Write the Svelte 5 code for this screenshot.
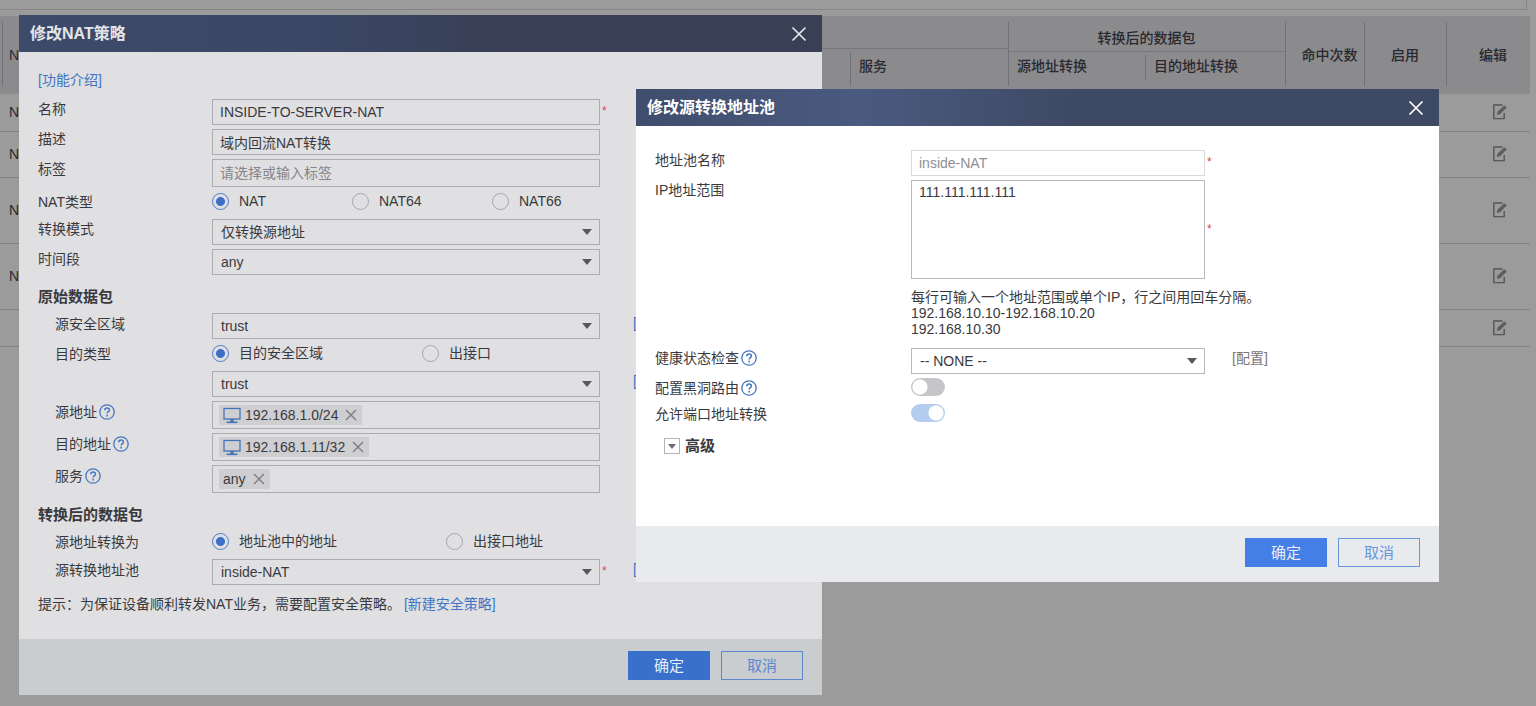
<script lang="ts">
  interface Choice {
    value: string;
    label: string;
  }

  let name = $state('INSIDE-TO-SERVER-NAT');
  let description = $state('域内回流NAT转换');
  let tag = $state('');
  let natType = $state('nat');
  let mode = $state('src');
  let period = $state('any');
  let srcZone = $state('trust');
  let dstType = $state('zone');
  let dstZone = $state('trust');
  let srcTarget = $state('pool');
  let pool = $state('inside-NAT');

  let poolRange = $state('111.111.111.111');
  let healthCheck = $state('none');
  let blackhole = $state(false);
  let allowPort = $state(true);

  const natTypes: Choice[] = [
    { value: 'nat', label: 'NAT' },
    { value: 'nat64', label: 'NAT64' },
    { value: 'nat66', label: 'NAT66' },
  ];
  const dstTypes: Choice[] = [
    { value: 'zone', label: '目的安全区域' },
    { value: 'iface', label: '出接口' },
  ];
  const srcTargets: Choice[] = [
    { value: 'pool', label: '地址池中的地址' },
    { value: 'iface', label: '出接口地址' },
  ];

  const policies = [
    { name: 'N', size: 'short' },
    { name: 'N', size: 'medium' },
    { name: 'N', size: 'tall' },
    { name: 'N', size: 'tall' },
    { name: '', size: 'short' },
  ];
</script>

{#snippet closeIcon()}
  <svg width="16" height="16" viewBox="0 0 16 16" fill="none" stroke="currentColor" stroke-width="1.7"><path d="M1.5 1.5l13 13M14.5 1.5l-13 13" /></svg>
{/snippet}

{#snippet help()}
  <svg class="help" width="16" height="16" viewBox="0 0 16 16" fill="none" stroke="currentColor">
    <circle cx="8" cy="8" r="7.2" stroke-width="1.3" />
    <path d="M5.7 6.3c0-1.5 1-2.4 2.4-2.4s2.3.9 2.3 2.1c0 1.6-2.2 1.7-2.2 3.4" stroke-width="1.5" />
    <path d="M8.1 10.8v1.6" stroke-width="1.6" />
  </svg>
{/snippet}

{#snippet chip(text: string, host: boolean)}
  <span class="chip">
    {#if host}
      <svg width="18" height="18" viewBox="0 0 18 18" fill="none" stroke="#4673b8">
        <rect x="1" y="2.5" width="16" height="10.5" stroke-width="1.3" />
        <path d="M9 13v3" stroke-width="3" />
        <path d="M3.5 16.3h11" stroke-width="1.6" />
      </svg>
    {/if}
    <span>{text}</span>
    <button type="button" class="chip-x" aria-label="删除 {text}">
      <svg width="12" height="12" viewBox="0 0 12 12" fill="none" stroke="currentColor" stroke-width="1.5"><path d="M1 1l10 10M11 1L1 11" /></svg>
    </button>
  </span>
{/snippet}

<main class="page">
  <div class="toolbar"></div>
  <table class="policy-table">
    <colgroup>
      <col />
      <col class="col-src" />
      <col class="col-service" />
      <col class="col-snat" />
      <col class="col-dnat" />
      <col class="col-hits" />
      <col class="col-enable" />
      <col class="col-edit" />
    </colgroup>
    <thead>
      <tr class="head-top">
        <th rowspan="2" class="first bar">N</th>
        <th colspan="2" class="group-src"></th>
        <th colspan="2" class="group-dst">转换后的数据包</th>
        <th rowspan="2" class="bar padded">命中次数</th>
        <th rowspan="2" class="bar">启用</th>
        <th rowspan="2" class="bar padded">编辑</th>
      </tr>
      <tr class="head-sub">
        <th></th>
        <th class="bar">服务</th>
        <th class="bar">源地址转换</th>
        <th class="bar bar-short">目的地址转换</th>
      </tr>
    </thead>
    <tbody>
      {#each policies as policy}
        <tr class={policy.size}>
          <td class="first">{policy.name}</td>
          <td colspan="6"></td>
          <td class="edit">
            <button type="button" aria-label="编辑">
              <svg width="16" height="18" viewBox="0 0 16 18" fill="none" stroke="#55555a">
                <path d="M10.5 2H1.8v13.6h10.4V10" stroke-width="1.4" />
                <path d="M4.8 12l.8-3.4 6.8-6.4 2.4 2.4L8 11.2z" fill="#5c5c61" stroke="none" />
              </svg>
            </button>
          </td>
        </tr>
      {/each}
    </tbody>
  </table>

  <form class="dialog policy" aria-label="修改NAT策略">
    <header>
      <h2>修改NAT策略</h2>
      <button type="button" class="close" aria-label="关闭">{@render closeIcon()}</button>
    </header>

    <div class="body">
      <a class="intro" href="#intro">[功能介绍]</a>

      <div class="row">
        <label for="name">名称</label>
        <input id="name" class="field" type="text" bind:value={name} />
        <span class="required">*</span>
      </div>
      <div class="row">
        <label for="description">描述</label>
        <input id="description" class="field" type="text" bind:value={description} />
      </div>
      <div class="row row-tall">
        <label for="tag">标签</label>
        <input id="tag" class="field" type="text" placeholder="请选择或输入标签" bind:value={tag} />
      </div>
      <div class="row row-radio">
        <span class="label">NAT类型</span>
        <div class="radios cols-three">
          {#each natTypes as t}
            <label><input type="radio" name="nat-type" value={t.value} bind:group={natType} />{t.label}</label>
          {/each}
        </div>
      </div>
      <div class="row">
        <label for="mode">转换模式</label>
        <div class="select">
          <select id="mode" class="field" bind:value={mode}><option value="src">仅转换源地址</option></select>
        </div>
      </div>
      <div class="row">
        <label for="period">时间段</label>
        <div class="select">
          <select id="period" class="field" bind:value={period}><option value="any">any</option></select>
        </div>
      </div>

      <section>
        <h3>原始数据包</h3>
        <div class="row">
          <label for="src-zone">源安全区域</label>
          <div class="select">
            <select id="src-zone" class="field" bind:value={srcZone}><option value="trust">trust</option></select>
          </div>
          <a class="side-link" href="#src-zone">[</a>
        </div>
        <div class="row row-radio">
          <span class="label">目的类型</span>
          <div class="radios cols-dst">
            {#each dstTypes as t}
              <label><input type="radio" name="dst-type" value={t.value} bind:group={dstType} />{t.label}</label>
            {/each}
          </div>
        </div>
        <div class="row">
          <span class="label"></span>
          <div class="select">
            <select class="field" aria-label="目的安全区域" bind:value={dstZone}><option value="trust">trust</option></select>
          </div>
          <a class="side-link" href="#dst-zone">[</a>
        </div>
        <div class="row row-tall">
          <span class="label">源地址{@render help()}</span>
          <div class="field chips">{@render chip('192.168.1.0/24', true)}</div>
        </div>
        <div class="row row-tall">
          <span class="label">目的地址{@render help()}</span>
          <div class="field chips">{@render chip('192.168.1.11/32', true)}</div>
        </div>
        <div class="row row-tall">
          <span class="label">服务{@render help()}</span>
          <div class="field chips">{@render chip('any', false)}</div>
        </div>
      </section>

      <section>
        <h3>转换后的数据包</h3>
        <div class="row row-radio">
          <span class="label">源地址转换为</span>
          <div class="radios cols-target">
            {#each srcTargets as t}
              <label><input type="radio" name="src-target" value={t.value} bind:group={srcTarget} />{t.label}</label>
            {/each}
          </div>
        </div>
        <div class="row">
          <label for="pool">源转换地址池</label>
          <div class="select">
            <select id="pool" class="field" bind:value={pool}><option value="inside-NAT">inside-NAT</option></select>
          </div>
          <span class="required">*</span>
          <a class="side-link after-star" href="#pool">[</a>
        </div>
      </section>

      <p class="tip">提示：为保证设备顺利转发NAT业务，需要配置安全策略。<a href="#policy">[新建安全策略]</a></p>
    </div>

    <footer>
      <button type="button" class="btn primary">确定</button>
      <button type="button" class="btn">取消</button>
    </footer>
  </form>

  <form class="dialog pool" aria-label="修改源转换地址池">
    <header>
      <h2>修改源转换地址池</h2>
      <button type="button" class="close" aria-label="关闭">{@render closeIcon()}</button>
    </header>

    <div class="body">
      <div class="row">
        <label for="pool-name">地址池名称</label>
        <input id="pool-name" class="field" type="text" value="inside-NAT" disabled />
        <span class="required">*</span>
      </div>
      <div class="row row-range">
        <label for="pool-range">IP地址范围</label>
        <div class="range">
          <textarea id="pool-range" class="field" bind:value={poolRange}></textarea>
          <p>每行可输入一个地址范围或单个IP，行之间用回车分隔。<br />192.168.10.10-192.168.10.20<br />192.168.10.30</p>
        </div>
        <span class="required required-mid">*</span>
      </div>
      <div class="row">
        <label for="health">健康状态检查{@render help()}</label>
        <div class="select">
          <select id="health" class="field" bind:value={healthCheck}><option value="none">-- NONE --</option></select>
        </div>
        <a class="side-link muted" href="#health">[配置]</a>
      </div>
      <div class="row row-switch">
        <label for="blackhole">配置黑洞路由{@render help()}</label>
        <input id="blackhole" class="switch" type="checkbox" bind:checked={blackhole} />
      </div>
      <div class="row row-switch">
        <label for="allow-port">允许端口地址转换</label>
        <input id="allow-port" class="switch" type="checkbox" bind:checked={allowPort} />
      </div>
      <button type="button" class="advanced"><span class="toggle-box"></span>高级</button>
    </div>

    <footer>
      <button type="button" class="btn primary">确定</button>
      <button type="button" class="btn">取消</button>
    </footer>
  </form>
</main>

<style>
  :global(body) { margin: 0; background: #9b9b9b; }

  .page {
    position: relative;
    min-height: 100vh;
    overflow: hidden;
    box-sizing: border-box;
    background: #9b9b9b;
    font: 14px/20px "Liberation Sans", "Noto Sans CJK SC", sans-serif;
    color: #3a3a3e;
  }

  button, input, select, textarea { font: inherit; color: inherit; }
  button { padding: 0; border: 0; background: none; cursor: pointer; }
  svg { display: block; flex-shrink: 0; }
  a { color: #3f74c4; text-decoration: none; }

  /* page behind the dialogs */
  .toolbar {
    height: 9px;
    margin-right: 9px;
    margin-bottom: 6px;
    border: solid #868686;
    border-width: 0 1px 1px 0;
  }

  .policy-table {
    width: calc(100% - 6px);
    border-collapse: collapse;
    table-layout: fixed;
    color: #29292f;
  }
  .col-src { width: 300px; }
  .col-service { width: 158px; }
  .col-snat { width: 137px; }
  .col-dnat { width: 140px; }
  .col-hits { width: 79px; }
  .col-enable { width: 82px; }
  .col-edit { width: 84px; }

  thead { background: #8b8b8e; }
  th { padding: 0; font-weight: 500; }
  .head-top { height: 36px; }
  .head-sub { height: 42px; }
  .head-top .group-dst { padding-top: 8px; }
  .head-top .padded { padding-left: 10px; }
  .head-sub th { padding: 4px 0 0 9px; text-align: left; vertical-align: top; }
  .bar { background: linear-gradient(#717176, #717176) 0 6px / 1px 64px no-repeat; }
  .head-sub .bar { background-position: 0 0; background-size: 1px 34px; }
  .head-sub .bar-short { background-position: 0 3px; background-size: 1px 25px; }
  .group-src { background: linear-gradient(#77777b, #77777b) 0 32px / 100% 1px no-repeat; }
  .group-dst {
    background:
      linear-gradient(#717176, #717176) 0 6px / 1px 30px no-repeat,
      linear-gradient(#77777b, #77777b) 0 100% / 100% 1px no-repeat;
  }
  .policy-table .first { padding-left: 9px; text-align: left; background-position-x: 2px; }

  td { padding: 0; border-bottom: 1px solid #838386; }
  .short { height: 37px; }
  .medium { height: 46px; }
  .tall { height: 66px; }
  .edit { padding-left: 24px; }
  .edit button { display: block; margin: 0 auto; }

  /* dialogs */
  .dialog {
    position: absolute;
    display: flex;
    flex-direction: column;
    width: 803px;
    background: var(--body);
  }
  .policy {
    left: 19px;
    top: 15px;
    --body: #e0e0e2;
    --field: #e0e0e2;
    --border: #adadb1;
    --footer: #cacdd0;
    --primary: #3870cb;
    --outline: #5a87cd;
    --label-width: 174px;
    --field-width: 388px;
  }
  .pool {
    left: 636px;
    top: 89px;
    --body: #fff;
    --field: #fff;
    --border: #b9b9bc;
    --footer: #e8eaed;
    --primary: #437fe6;
    --outline: #6796df;
    --label-width: 256px;
    --field-width: 294px;
  }

  header {
    display: flex;
    align-items: center;
    justify-content: space-between;
    height: 37px;
    padding: 0 15px 0 11px;
    background: linear-gradient(90deg, #3d4a69, #3b4766 35%, #394056 60%);
    color: #e4e5e9;
  }
  .pool header {
    background: linear-gradient(90deg, #404d6c, #4a5a80 28%, #3e4963 55%);
    color: #fff;
  }
  h2 { margin: 0; font-size: 16px; line-height: 24px; font-weight: 700; }

  .body { padding: 18px 0 20px 19px; }
  .pool .body { padding: 24px 0 65px 19px; }
  .intro { display: block; width: max-content; margin-bottom: 9px; }

  .row { display: flex; align-items: flex-start; height: 30px; }
  .row-tall { height: 32px; }
  .row-radio { height: 28px; }
  .row > label, .label {
    display: flex;
    align-items: center;
    gap: 2px;
    box-sizing: border-box;
    flex: none;
    width: var(--label-width);
    height: 20px;
  }
  .row-radio .label, section .row > label, section .label { height: 22px; }
  section .row > label, section .label { padding-left: 17px; }
  .help { color: #4676bd; }

  .field {
    display: block;
    box-sizing: border-box;
    width: var(--field-width);
    height: 26px;
    margin: 0;
    padding: 0 7px;
    border: 1px solid var(--border);
    border-radius: 0;
    background: var(--field);
    outline: 0;
  }
  .row-tall .field { height: 28px; }
  .field::placeholder { color: #85858a; opacity: 1; }
  .field:disabled { color: #8f8f92; border-color: #d9d9dc; }

  .select { position: relative; }
  .select select { appearance: none; padding: 0 24px 0 8px; }
  .select::after {
    content: "";
    position: absolute;
    right: 8px;
    top: 10px;
    border: 5px solid transparent;
    border-top: 6px solid #58585c;
    border-bottom: 0;
    pointer-events: none;
  }

  .required { width: 8px; padding-left: 2px; color: #d8455c; line-height: 24px; font-size: 12px; }
  .required-mid { line-height: 98px; }
  .side-link { margin-left: 33px; line-height: 20px; }
  .after-star { margin-left: 23px; }
  .muted { margin-left: 27px; color: #77777b; }

  .radios { display: grid; }
  .cols-three { grid-template-columns: 140px 140px 140px; }
  .cols-dst { grid-template-columns: 210px 140px; }
  .cols-target { grid-template-columns: 234px 140px; }
  .radios label { display: flex; align-items: center; gap: 10px; height: 20px; }
  .radios input {
    appearance: none;
    box-sizing: border-box;
    width: 17px;
    height: 17px;
    margin: 0;
    border: 1px solid #a6a6aa;
    border-radius: 50%;
  }
  .radios input:checked {
    border-color: #4a7bcb;
    background: radial-gradient(circle, #3c70c6 0 4px, transparent 5px);
  }

  .chips { display: flex; align-items: center; padding: 0 6px; }
  .chip {
    display: flex;
    align-items: center;
    gap: 4px;
    height: 20px;
    padding: 0 5px 0 4px;
    background: #cfcfd2;
  }
  .chip-x { margin-left: 3px; color: #828286; }

  h3 { margin: 0; font-size: 15px; line-height: 32px; font-weight: 700; }
  section { padding-top: 2px; }
  .tip { margin: 0; line-height: 30px; }
  .tip a { margin-left: 3px; }

  .range { width: var(--field-width); }
  .row-range { height: 168px; }
  .range textarea { height: 99px; padding: 1px 7px; line-height: 20px; resize: none; }
  .range p { margin: 10px 0 0; line-height: 16px; white-space: nowrap; }

  .row-switch { height: 26px; }
  .switch {
    appearance: none;
    width: 34px;
    height: 18px;
    margin: 0;
    border-radius: 9px;
    background: radial-gradient(circle at 9px 9px, #fff 0 7px, transparent 8px) #c6c6ca;
  }
  .switch:checked { background: radial-gradient(circle at 25px 9px, #fff 0 7px, transparent 8px) #b4cdee; }

  .advanced {
    display: flex;
    align-items: center;
    gap: 5px;
    height: 30px;
    margin-top: 1px;
    margin-left: 9px;
    font-size: 15px;
    font-weight: 700;
  }
  .toggle-box {
    display: flex;
    align-items: center;
    justify-content: center;
    box-sizing: border-box;
    width: 16px;
    height: 16px;
    border: 1px solid #b5b5b8;
  }
  .toggle-box::after {
    content: "";
    border: 4px solid transparent;
    border-top: 5px solid #707074;
    border-bottom: 0;
  }

  footer {
    display: flex;
    align-items: center;
    justify-content: flex-end;
    gap: 11px;
    height: 52px;
    padding: 0 19px 4px;
    background: var(--footer);
  }
  .btn {
    box-sizing: border-box;
    width: 82px;
    height: 29px;
    border: 1px solid var(--outline);
    color: var(--outline);
    font-size: 15px;
    line-height: 27px;
  }
  .primary { border-color: var(--primary); background: var(--primary); color: #e9edf5; }
</style>
